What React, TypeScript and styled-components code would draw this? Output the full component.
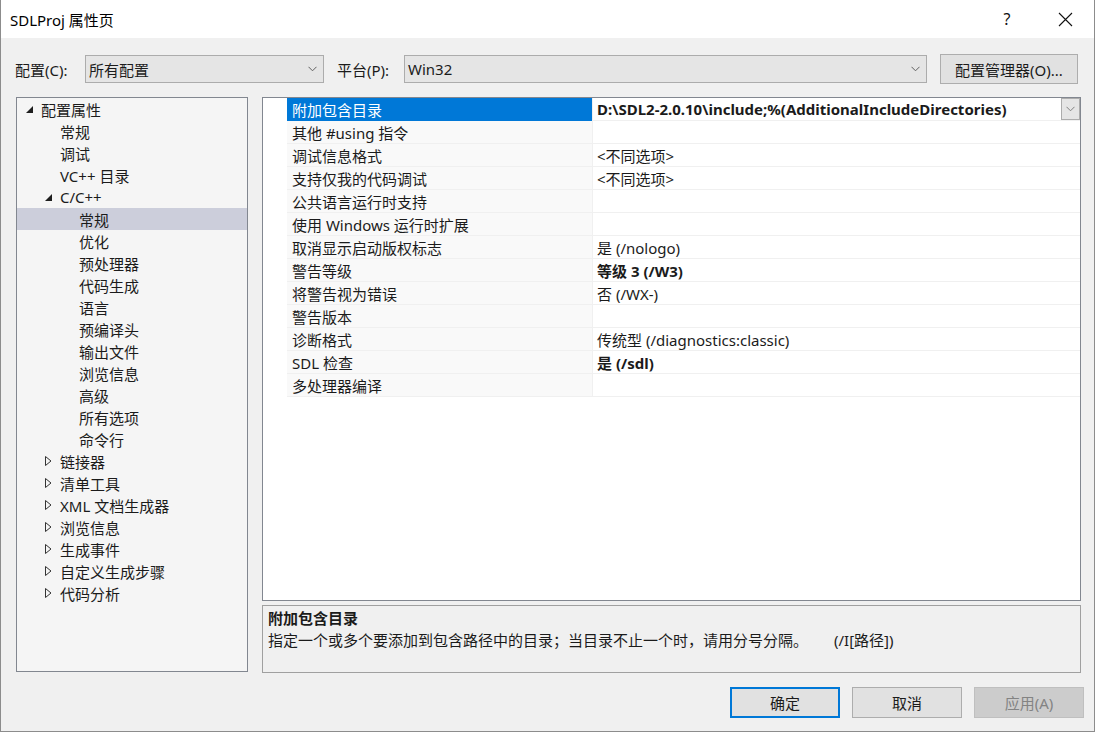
import * as React from "react";
import styled, { createGlobalStyle } from "styled-components";

const Global = createGlobalStyle`
  html, body {
    margin: 0;
    padding: 0;
    overflow: hidden;
    background: #f0f0f0;
  }
  * { box-sizing: border-box; }
`;

const FONT = `"Segoe UI", "Noto Sans", "Noto Sans CJK SC", sans-serif`;

const Window = styled.div`
  width: 1095px;
  height: 732px;
  display: flex;
  flex-direction: column;
  background: #f0f0f0;
  border: 1px solid #8c8c8c;
  border-top: none;
  font-family: ${FONT};
  font-size: 15px;
  color: #1b1b1b;
`;

const TitleBar = styled.div`
  height: 38px;
  flex: none;
  background: #ffffff;
  display: flex;
  align-items: center;
  padding-left: 9px;
`;

const TitleText = styled.div`
  flex: 1;
  font-size: 15px;
  color: #000;
`;

const TitleButton = styled.div`
  width: 58px;
  height: 38px;
  display: flex;
  align-items: center;
  justify-content: center;
  font-size: 16px;
  color: #111;
`;

const ConfigRow = styled.div`
  display: flex;
  align-items: center;
  height: 30px;
  margin-top: 16px;
  padding-left: 14px;
`;

const Label = styled.span<{ $w: number }>`
  width: ${(p) => p.$w}px;
  flex: none;
  white-space: nowrap;
`;

const Combo = styled.div<{ $w: number }>`
  width: ${(p) => p.$w}px;
  height: 28px;
  flex: none;
  display: flex;
  align-items: center;
  justify-content: space-between;
  padding: 0 6px 0 3px;
  background: #e5e5e5;
  border: 1px solid #acacac;
  margin-right: 13px;
`;

const Button = styled.div<{ $w: number; $variant?: "default" | "plain" | "disabled" }>`
  width: ${(p) => p.$w}px;
  height: ${(p) => (p.$variant ? 31 : 30)}px;
  flex: none;
  display: flex;
  align-items: center;
  justify-content: center;
  background: ${(p) => (p.$variant === "disabled" ? "#cccccc" : "#e1e1e1")};
  border: ${(p) =>
    p.$variant === "default" ? "2px solid #0078d7" : p.$variant === "disabled" ? "1px solid #bfbfbf" : "1px solid #adadad"};
  color: ${(p) => (p.$variant === "disabled" ? "#838383" : "#1b1b1b")};
  white-space: nowrap;
`;

const Main = styled.div`
  display: flex;
  margin-top: 13px;
  padding-left: 15px;
  height: 575px;
`;

const Tree = styled.div`
  width: 232px;
  height: 575px;
  flex: none;
  background: #f5f5f5;
  border: 1px solid #828790;
  margin-right: 14px;
`;

const TreeRow = styled.div<{ $level: number; $selected?: boolean }>`
  height: 22px;
  display: flex;
  align-items: center;
  padding-left: ${(p) => 5 + p.$level * 19}px;
  background: ${(p) => (p.$selected ? "#cccedb" : "transparent")};
  white-space: nowrap;
`;

const Expander = styled.span`
  width: 19px;
  height: 22px;
  flex: none;
  display: flex;
  align-items: center;
  padding-left: 4px;
`;

const RightCol = styled.div`
  width: 819px;
  display: flex;
  flex-direction: column;
  gap: 4px;
`;

const Grid = styled.div`
  height: 504px;
  flex: none;
  background: #ffffff;
  border: 1px solid #828790;
`;

const GridRow = styled.div`
  display: flex;
  height: 23px;
`;

const Gutter = styled.div`
  width: 24px;
  flex: none;
  background: #ffffff;
`;

const NameCell = styled.div<{ $selected?: boolean }>`
  width: 305px;
  flex: none;
  display: flex;
  align-items: center;
  padding-left: 5px;
  background: ${(p) => (p.$selected ? "#0078d7" : "#f9f9f9")};
  color: ${(p) => (p.$selected ? "#ffffff" : "#1b1b1b")};
  border-bottom: 1px solid ${(p) => (p.$selected ? "#0078d7" : "#f0f0f0")};
  white-space: nowrap;
`;

const ValueCell = styled.div<{ $bold?: boolean }>`
  flex: 1;
  display: flex;
  align-items: center;
  padding-left: 4px;
  font-weight: ${(p) => (p.$bold ? 700 : 400)};
  border-left: 1px solid #f0f0f0;
  border-bottom: 1px solid #f0f0f0;
  white-space: nowrap;
  overflow: hidden;
`;

const DropButton = styled.div`
  margin-left: auto;
  width: 19px;
  height: 22px;
  flex: none;
  display: flex;
  align-items: center;
  justify-content: center;
  background: #e5e5e5;
  border: 1px solid #acacac;
`;

const Desc = styled.div`
  height: 68px;
  flex: none;
  border: 1px solid #a0a0a0;
  background: #f0f0f0;
  padding: 0 0 0 5px;
`;

const DescTitle = styled.div`
  font-weight: 700;
  height: 22px;
  display: flex;
  align-items: center;
`;

const DescText = styled.div`
  height: 23px;
  display: flex;
  align-items: center;
  white-space: nowrap;
`;

const Switch = styled.span`
  margin-left: 26px;
`;

const Footer = styled.div`
  display: flex;
  justify-content: flex-end;
  gap: 12px;
  margin-top: 15px;
  padding-right: 10px;
`;

const Chevron = ({ color = "#606060" }: { color?: string }) => (
  <svg width="9" height="6" viewBox="0 0 9 6">
    <path d="M0.5 0.8 L4.5 4.8 L8.5 0.8" fill="none" stroke={color} strokeWidth="1" />
  </svg>
);

const Expanded = () => (
  <svg width="7" height="7" viewBox="0 0 7 7">
    <polygon points="7,0 7,7 0,7" fill="#1e1e1e" />
  </svg>
);

const Collapsed = () => (
  <svg width="7" height="10" viewBox="0 0 7 10">
    <polygon points="0.5,0.5 6,5 0.5,9.5" fill="none" stroke="#333" strokeWidth="1" />
  </svg>
);

type Node = { label: string; level: number; exp?: "open" | "closed"; selected?: boolean };

const tree: Node[] = [
  { label: "配置属性", level: 0, exp: "open" },
  { label: "常规", level: 1 },
  { label: "调试", level: 1 },
  { label: "VC++ 目录", level: 1 },
  { label: "C/C++", level: 1, exp: "open" },
  { label: "常规", level: 2, selected: true },
  { label: "优化", level: 2 },
  { label: "预处理器", level: 2 },
  { label: "代码生成", level: 2 },
  { label: "语言", level: 2 },
  { label: "预编译头", level: 2 },
  { label: "输出文件", level: 2 },
  { label: "浏览信息", level: 2 },
  { label: "高级", level: 2 },
  { label: "所有选项", level: 2 },
  { label: "命令行", level: 2 },
  { label: "链接器", level: 1, exp: "closed" },
  { label: "清单工具", level: 1, exp: "closed" },
  { label: "XML 文档生成器", level: 1, exp: "closed" },
  { label: "浏览信息", level: 1, exp: "closed" },
  { label: "生成事件", level: 1, exp: "closed" },
  { label: "自定义生成步骤", level: 1, exp: "closed" },
  { label: "代码分析", level: 1, exp: "closed" },
];

type Prop = { name: string; value: string; bold?: boolean };

const props: Prop[] = [
  { name: "附加包含目录", value: "D:\\SDL2-2.0.10\\include;%(AdditionalIncludeDirectories)", bold: true },
  { name: "其他 #using 指令", value: "" },
  { name: "调试信息格式", value: "<不同选项>" },
  { name: "支持仅我的代码调试", value: "<不同选项>" },
  { name: "公共语言运行时支持", value: "" },
  { name: "使用 Windows 运行时扩展", value: "" },
  { name: "取消显示启动版权标志", value: "是 (/nologo)" },
  { name: "警告等级", value: "等级 3 (/W3)", bold: true },
  { name: "将警告视为错误", value: "否 (/WX-)" },
  { name: "警告版本", value: "" },
  { name: "诊断格式", value: "传统型 (/diagnostics:classic)" },
  { name: "SDL 检查", value: "是 (/sdl)", bold: true },
  { name: "多处理器编译", value: "" },
];

const App = () => (
  <Window>
    <Global />
    <TitleBar>
      <TitleText>SDLProj 属性页</TitleText>
      <TitleButton>?</TitleButton>
      <TitleButton>
        <svg width="15" height="15" viewBox="0 0 15 15">
          <path d="M1 1 L14 14 M14 1 L1 14" stroke="#111" strokeWidth="1.1" />
        </svg>
      </TitleButton>
    </TitleBar>

    <ConfigRow>
      <Label $w={70}>配置(C):</Label>
      <Combo $w={239}>
        <span>所有配置</span>
        <Chevron />
      </Combo>
      <Label $w={67}>平台(P):</Label>
      <Combo $w={523}>
        <span>Win32</span>
        <Chevron />
      </Combo>
      <Button $w={138}>配置管理器(O)...</Button>
    </ConfigRow>

    <Main>
      <Tree>
        {tree.map((n, i) => (
          <TreeRow key={i} $level={n.level} $selected={n.selected}>
            <Expander>
              {n.exp === "open" && <Expanded />}
              {n.exp === "closed" && <Collapsed />}
            </Expander>
            {n.label}
          </TreeRow>
        ))}
      </Tree>

      <RightCol>
        <Grid>
          {props.map((p, i) => (
            <GridRow key={i}>
              <Gutter />
              <NameCell $selected={i === 0}>{p.name}</NameCell>
              <ValueCell $bold={p.bold}>
                {p.value}
                {i === 0 && (
                  <DropButton>
                    <Chevron color="#808080" />
                  </DropButton>
                )}
              </ValueCell>
            </GridRow>
          ))}
        </Grid>
        <Desc>
          <DescTitle>附加包含目录</DescTitle>
          <DescText>
            指定一个或多个要添加到包含路径中的目录；当目录不止一个时，请用分号分隔。
            <Switch>(/I[路径])</Switch>
          </DescText>
        </Desc>
      </RightCol>
    </Main>

    <Footer>
      <Button $w={110} $variant="default">确定</Button>
      <Button $w={110} $variant="plain">取消</Button>
      <Button $w={110} $variant="disabled">应用(A)</Button>
    </Footer>
  </Window>
);

export default App;
